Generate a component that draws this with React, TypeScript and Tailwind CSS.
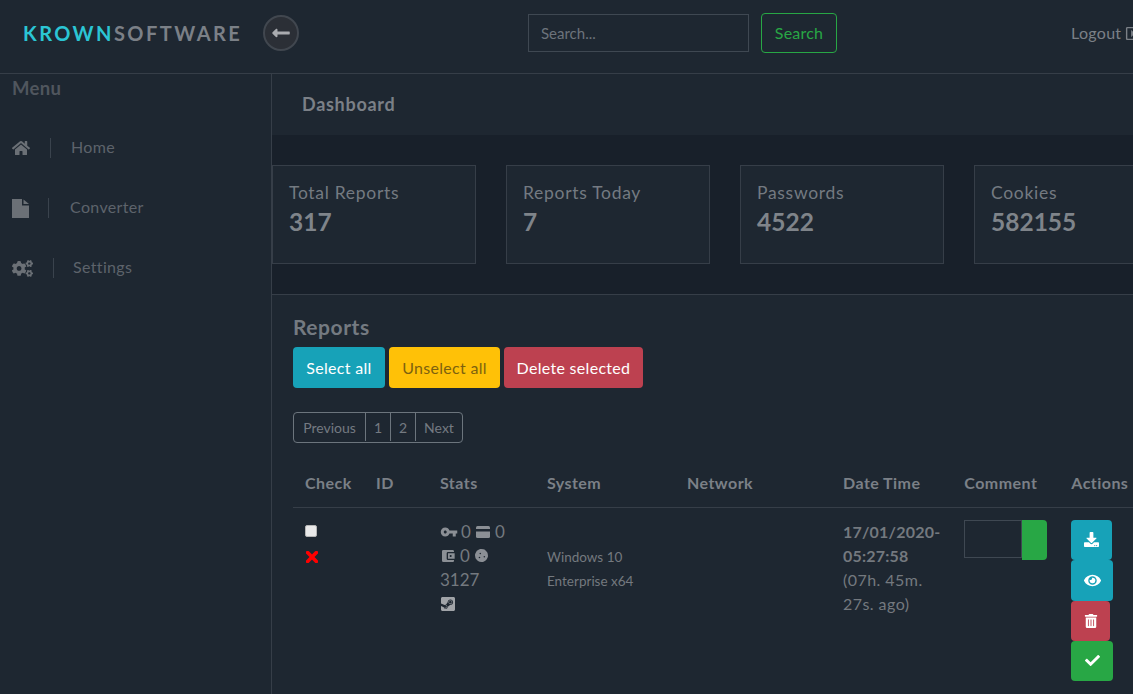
import {
  FaCheck,
  FaCogs,
  FaCookie,
  FaDownload,
  FaEye,
  FaHome,
  FaLongArrowAltLeft,
  FaRegCaretSquareRight,
  FaSteamSquare,
  FaTrashAlt,
} from "react-icons/fa";
import { MdAccountBalanceWallet, MdVpnKey } from "react-icons/md";

function FileIcon() {
  return (
    <svg width="17" height="19" viewBox="0 0 17 19" className="text-[#6b7076]" fill="currentColor">
      <path d="M0 0H10V6.5H17V19H0Z" />
      <path d="M11.5 0.5L17 5H11.5Z" />
    </svg>
  );
}

function CardIcon() {
  return (
    <svg width="14" height="12" viewBox="0 0 14 12" className="text-[#8b8f95]">
      <rect width="14" height="12" rx="1.5" fill="currentColor" />
      <rect y="3" width="14" height="2.5" fill="#1e2731" />
    </svg>
  );
}

function CrossIcon() {
  return (
    <svg width="12" height="12" viewBox="0 0 12 12" className="ml-[1px] mt-[14px]">
      <path d="M1.6 1.6L10.4 10.4M10.4 1.6L1.6 10.4" stroke="#ff0000" strokeWidth="3.6" strokeLinecap="round" />
    </svg>
  );
}

const STATS = [
  { label: "Total Reports", value: "317" },
  { label: "Reports Today", value: "7" },
  { label: "Passwords", value: "4522" },
  { label: "Cookies", value: "582155" },
];

const NAV = [
  { icon: <FaHome size={18} className="text-[#6b7076]" />, label: "Home", line: "ml-[17px]", text: "ml-[20px]" },
  { icon: <FileIcon />, label: "Converter", line: "ml-[15px]", text: "ml-[21px]" },
  { icon: <FaCogs size={21} className="text-[#6b7076]" />, label: "Settings", line: "ml-[20px]", text: "ml-[19px]" },
];

const COLUMNS = [
  { label: "Check", width: "w-[70px]" },
  { label: "ID", width: "w-[64px]" },
  { label: "Stats", width: "w-[107px]" },
  { label: "System", width: "w-[140px]" },
  { label: "Network", width: "w-[156px]" },
  { label: "Date Time", width: "w-[121px]" },
  { label: "Comment", width: "w-[107px]" },
  { label: "Actions", width: "w-[90px]" },
];

function Navbar() {
  return (
    <header className="flex h-[74px] shrink-0 items-center border-b border-[#363e48] bg-[#1e2731] pb-[7px]">
      <div className="ml-[23px] flex w-[219px] shrink-0 text-[20px] font-bold tracking-[2.45px]">
        <span className="text-[#2bc5d4]">KROWN</span>
        <span className="text-[#7b8087]">SOFTWARE</span>
      </div>
      <button className="ml-[21px] flex h-[36px] w-[36px] shrink-0 items-center justify-center rounded-full border-2 border-[#41474f] bg-[#2b2f36] text-[#a9abaf]">
        <FaLongArrowAltLeft size={20} />
      </button>
      <input
        placeholder="Search..."
        className="ml-[229px] h-[38px] w-[221px] shrink-0 border border-[#3f4852] bg-transparent px-3 text-[15px] text-[#7b8087] placeholder:text-[#6c737b]"
      />
      <button className="ml-[12px] h-[40px] w-[76px] shrink-0 rounded-[4px] border border-[#28a745] text-[16px] tracking-[0.2px] text-[#28a745]">
        Search
      </button>
      <div className="ml-[234px] flex shrink-0 items-center gap-[4px] text-[16px] tracking-[0.3px] text-[#7b8087]">
        Logout
        <FaRegCaretSquareRight size={15} />
      </div>
    </header>
  );
}

function Sidebar() {
  return (
    <aside className="flex w-[272px] shrink-0 flex-col border-r border-[#363e48] pl-[12px] text-[#5d636b]">
      <h2 className="mt-[2px] text-[18.5px] font-bold leading-[24px] tracking-[0.3px] text-[#50565e]">Menu</h2>
      <nav className="mt-[18px] flex flex-col">
        {NAV.map((item) => (
          <a key={item.label} className="flex h-[60px] items-center">
            <span className="flex w-[21px] justify-start">{item.icon}</span>
            <span className={`h-[20px] w-px bg-[#3a434d] ${item.line}`} />
            <span className={`mb-[2px] text-[16px] tracking-[0.35px] ${item.text}`}>{item.label}</span>
          </a>
        ))}
      </nav>
    </aside>
  );
}

function StatCards() {
  return (
    <div className="flex h-[159px] shrink-0 items-center gap-[30px] bg-[#18202a]">
      {STATS.map((s) => (
        <div key={s.label} className="h-[99px] w-[204px] shrink-0 border border-[#363e48] bg-[#1e2731] px-[16px] pt-[15px]">
          <div className="text-[17.5px] leading-[24px] tracking-[0.7px] text-[#747a81]">{s.label}</div>
          <div className="mt-[2px] text-[24.5px] font-bold leading-[30px] text-[#7f848a]">{s.value}</div>
        </div>
      ))}
    </div>
  );
}

function ReportRow() {
  return (
    <tr className="align-top text-[16px] text-[#74797f]">
      <td className="px-[12px] pt-[12px]">
        <div className="mt-[5px] h-[12px] w-[12px] rounded-[2px] border border-[#b5b5b5] bg-[#e9e9e9]" />
        <CrossIcon />
      </td>
      <td />
      <td className="px-[12px] pt-[12px] text-[17px] leading-[24px]">
        <div className="flex items-center gap-[5px]">
          <MdVpnKey size={18} className="mr-[-2px] text-[#8b8f95]" /> 0 <CardIcon /> 0
        </div>
        <div className="flex items-center gap-[5px]">
          <MdAccountBalanceWallet size={16} className="mr-[-1px] text-[#8b8f95]" /> 0 <FaCookie size={13} className="text-[#8b8f95]" />
        </div>
        <div>3127</div>
        <FaSteamSquare size={16} className="mt-[4px] text-[#a1a4a8]" />
      </td>
      <td className="px-[12px] pt-[37px] text-[13.5px] leading-[24px]">
        Windows 10
        <br />
        Enterprise x64
      </td>
      <td />
      <td className="px-[12px] pt-[12px] leading-[24px] tracking-[0.45px]">
        <div className="font-bold tracking-[0.2px]">
          17/01/2020-
          <br />
          05:27:58
        </div>
        <div>
          (07h. 45m.
          <br />
          27s. ago)
        </div>
      </td>
      <td className="px-[12px] pt-[12px]">
        <div className="flex w-[83px]">
          <div className="h-[38px] w-[58px] border border-[#3f4852]" />
          <div className="h-[40px] w-[26px] rounded-r-[4px] bg-[#28a745]" />
        </div>
      </td>
      <td className="px-[12px] pt-[12px]">
        <div className="flex flex-col items-start text-white">
          <button className="flex h-[40px] w-[41px] items-center justify-center rounded-[4px] bg-[#17a2b8]">
            <FaDownload size={15} />
          </button>
          <button className="flex h-[41px] w-[42px] items-center justify-center rounded-[4px] bg-[#17a2b8]">
            <FaEye size={17} />
          </button>
          <button className="flex h-[40px] w-[39px] items-center justify-center rounded-[4px] bg-[#bd4150]">
            <FaTrashAlt size={14} />
          </button>
          <button className="flex h-[40px] w-[42px] items-center justify-center rounded-[4px] bg-[#28a745]">
            <FaCheck size={15} />
          </button>
        </div>
      </td>
    </tr>
  );
}

function Reports() {
  return (
    <section className="flex-1 border-t border-[#363e48] bg-[#1e2731] pl-[21px] pt-[20px]">
      <h2 className="mt-[-1px] text-[21px] font-bold leading-[26px] tracking-[0.55px] text-[#747a81]">Reports</h2>
      <div className="mt-[7px] flex gap-[4px] text-[16px] tracking-[0.3px]">
        <button className="h-[41px] w-[92px] rounded-[4px] bg-[#17a2b8] pt-[1px] text-white">Select all</button>
        <button className="h-[41px] w-[111px] rounded-[4px] bg-[#ffc107] pt-[1px] text-[#7d610f]">Unselect all</button>
        <button className="h-[41px] w-[139px] rounded-[4px] bg-[#bd4150] pt-[1px] text-white">Delete selected</button>
      </div>
      <div className="mt-[24px] flex h-[31px] w-[170px] rounded-[4px] border border-[#6c757d] pb-[1px] text-[14px] text-[#747a81]">
        <span className="flex w-[72px] items-center justify-center border-r border-[#6c757d]">Previous</span>
        <span className="flex w-[25px] items-center justify-center border-r border-[#6c757d]">1</span>
        <span className="flex w-[25px] items-center justify-center border-r border-[#6c757d]">2</span>
        <span className="flex flex-1 items-center justify-center">Next</span>
      </div>
      <table className="mt-[21px] table-fixed border-collapse">
        <thead>
          <tr className="border-b border-[#363e48]">
            {COLUMNS.map((c, i) => (
              <th
                key={c.label}
                className={`h-[43px] px-[12px] pb-[4px] text-left align-middle text-[16px] font-bold tracking-[0.45px] text-[#7b8087] ${c.width} ${i === 0 ? "min-w-[71px]" : ""}`}
              >
                {c.label}
              </th>
            ))}
          </tr>
        </thead>
        <tbody>
          <ReportRow />
        </tbody>
      </table>
    </section>
  );
}

export default function App() {
  return (
    <div className="flex h-[694px] w-[1133px] flex-col overflow-hidden bg-[#1e2731] font-['Lato','Noto_Sans',sans-serif]">
      <Navbar />
      <div className="flex min-h-0 flex-1">
        <Sidebar />
        <main className="flex w-[900px] shrink-0 flex-col">
          <div className="flex h-[61px] shrink-0 items-center pl-[30px] text-[18px] font-bold tracking-[0.7px] text-[#7b8087]">Dashboard</div>
          <StatCards />
          <Reports />
        </main>
      </div>
    </div>
  );
}
